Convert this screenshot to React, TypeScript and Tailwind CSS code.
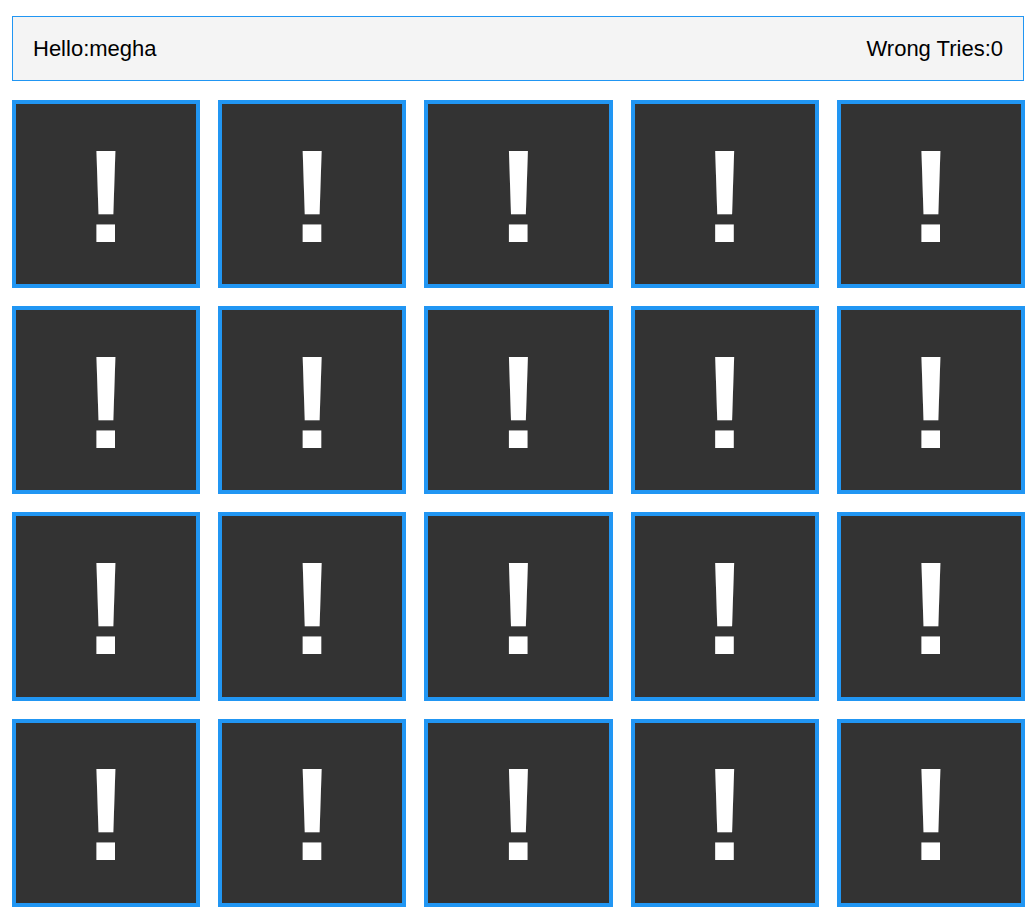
import React from "react";

export default function App() {
  const cards = Array.from({ length: 20 });
  return (
    <div className="w-[1033px] min-h-[917px] bg-white pl-3 pr-2 pt-4" style={{ fontFamily: '"Liberation Sans", Arial, sans-serif' }}>
      <div className="mr-px flex items-center justify-between border border-[#2196f3] bg-[#f4f4f4] px-5 py-5 text-[22px] leading-[23px] text-black">
        <span>Hello:megha</span>
        <span>Wrong Tries:0</span>
      </div>
      <div className="mt-[19px] grid grid-cols-5 gap-[18px]">
        {cards.map((_, i) => (
          <div
            key={i}
            className="flex aspect-square items-center justify-center border-4 border-[#2196f3] bg-[#333333] pt-[5px] text-[132px] font-bold leading-none text-white"
          >
            !
          </div>
        ))}
      </div>
    </div>
  );
}
